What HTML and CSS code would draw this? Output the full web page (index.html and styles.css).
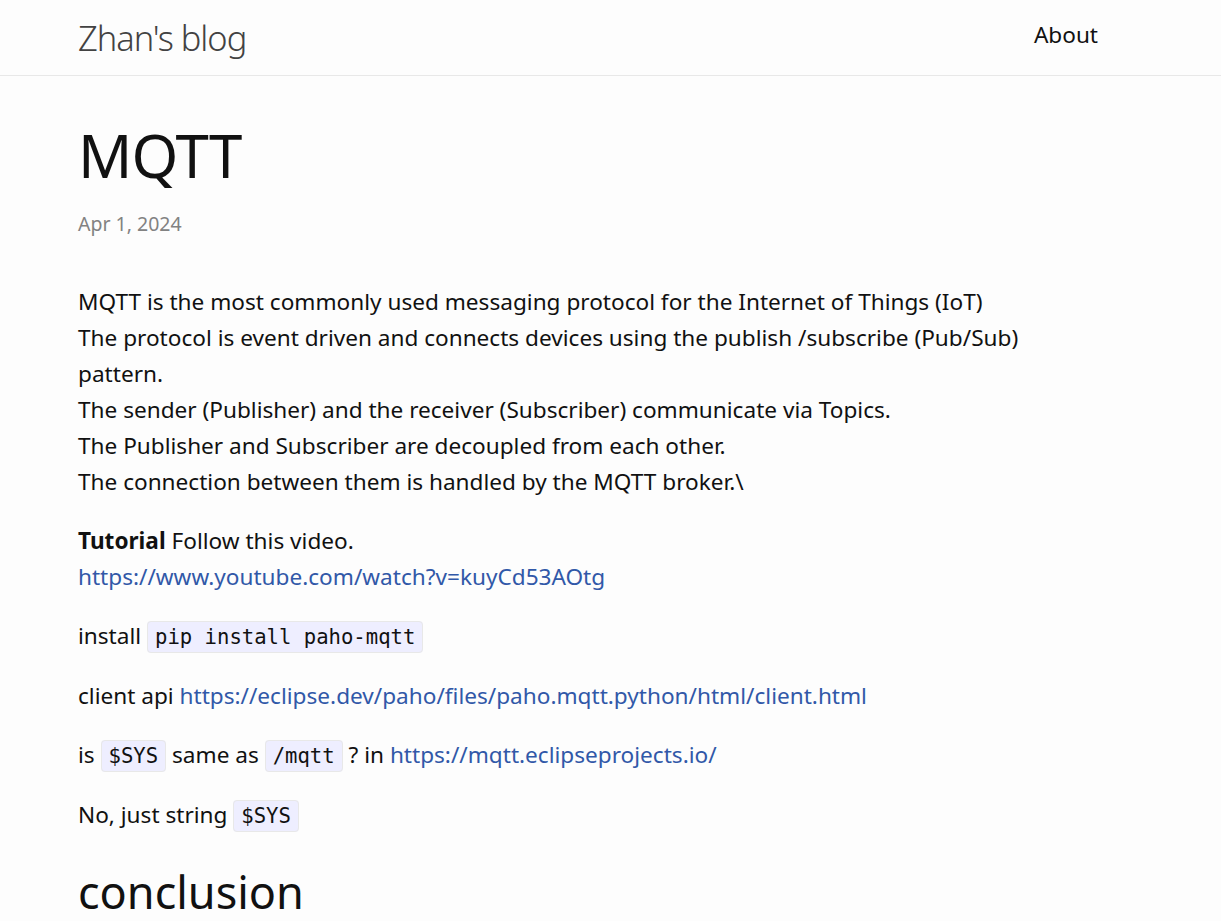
FILE: index.html
```html
<!DOCTYPE html>
<html lang="en">
<head>
<meta charset="utf-8">
<title>MQTT | Zhan's blog</title>
<link rel="stylesheet" href="styles.css">
</head>
<body>
<header class="site-header">
  <div class="wrapper header-row">
    <a class="site-title" href="#">Zhan's blog</a>
    <nav class="site-nav"><a class="page-link" href="#">About</a></nav>
  </div>
</header>
<main class="page-content">
  <div class="wrapper">
    <article class="post">
      <header class="post-header">
        <h1 class="post-title">MQTT</h1>
        <p class="post-meta"><time>Apr 1, 2024</time></p>
      </header>
      <div class="post-content">
        <p>MQTT is the most commonly used messaging protocol for the Internet of Things (IoT)<br>
        The protocol is event driven and connects devices using the publish /subscribe (Pub/Sub) pattern.<br>
        The sender (Publisher) and the receiver (Subscriber) communicate via Topics.<br>
        The Publisher and Subscriber are decoupled from each other.<br>
        The connection between them is handled by the MQTT broker.\</p>
        <p><strong>Tutorial</strong> Follow this video.<br>
        <a href="#">https://www.youtube.com/watch?v=kuyCd53AOtg</a></p>
        <p>install <code>pip install paho-mqtt</code></p>
        <p>client api <a href="#">https://eclipse.dev/paho/files/paho.mqtt.python/html/client.html</a></p>
        <p>is <code>$SYS</code> same as <code>/mqtt</code> ? in <a href="#">https://mqtt.eclipseprojects.io/</a></p>
        <p>No, just string <code>$SYS</code></p>
        <h2>conclusion</h2>
      </div>
    </article>
  </div>
</main>
</body>
</html>
```
FILE: styles.css
```css
html, body {
  margin: 0;
  padding: 0;
}
body {
  background: #fdfdfd;
  color: #111111;
  font-family: "Noto Sans", "Open Sans", sans-serif;
  font-size: 22.6px;
  line-height: 36px;
  overflow: hidden;
}
a {
  color: #3158a8;
  text-decoration: none;
}
.wrapper {
  width: 1020px;
  padding-left: 78px;
}
.site-header {
  height: 75px;
  border-bottom: 1px solid #e8e8e8;
}
.header-row {
  display: flex;
  justify-content: space-between;
  align-items: flex-start;
}
.site-title {
  color: #424242;
  font-weight: 300;
  font-size: 34.4px;
  line-height: 75px;
  letter-spacing: -1px;
}
.site-nav {
  padding-top: 17px;
}
.page-link {
  color: #111111;
  font-size: 22.6px;
  line-height: 36px;
}
.page-content {
  padding-top: 42px;
}
.post-header {
  margin-bottom: 44px;
}
.post-title {
  margin: 0;
  font-size: 60px;
  font-weight: 400;
  line-height: 75px;
  letter-spacing: -1px;
}
.post-meta {
  margin: 15px 0 0;
  color: #828282;
  font-size: 19.5px;
  line-height: 32px;
}
.post-content {
  width: 1000px;
}
.post-content p {
  margin: 0 0 23px;
}
code {
  font-family: "DejaVu Sans Mono", monospace;
  font-size: 20.6px;
  background: #eeeeff;
  border: 1px solid #e8e8e8;
  border-radius: 4px;
  padding: 3px 7px;
}
strong {
  font-weight: 700;
}
.post-content h2 {
  margin: 0;
  font-size: 45px;
  font-weight: 400;
  line-height: 70px;
}
```
